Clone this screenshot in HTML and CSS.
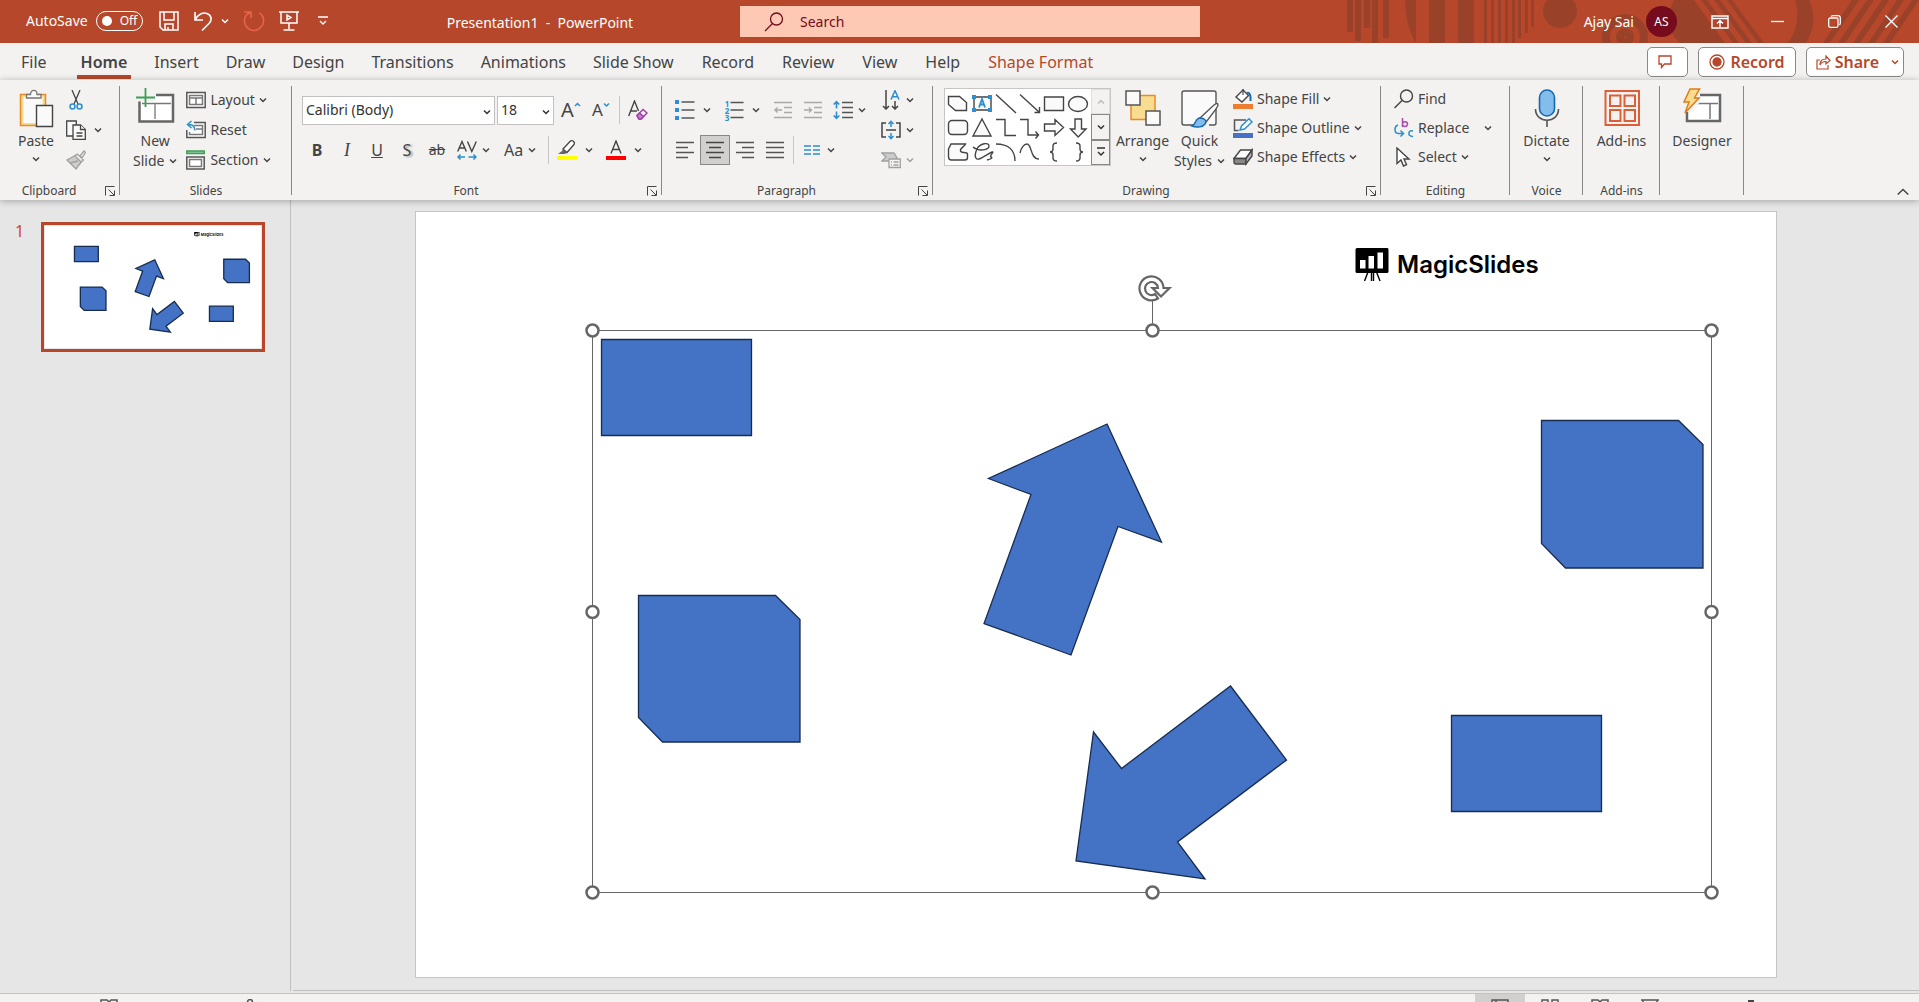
FILE: index.html
```html
<!DOCTYPE html>
<html lang="en">
<head>
<meta charset="utf-8">
<title>Presentation1 - PowerPoint</title>
<link rel="stylesheet" href="styles.css">
</head>
<body>
<svg class="defs" aria-hidden="true">
  <symbol id="chev" viewBox="0 0 8 8"><path d="M1 2.500 4 5.500 7 2.500" fill="none" stroke="currentColor" stroke-width="1.500"/></symbol>
  <symbol id="launch" viewBox="0 0 10 10"><path d="M.5 9.500V.5H9.500M3.500 3.500 9 9M9.500 4.500V9.500H4.500" fill="none" stroke="currentColor"/></symbol>
  <g id="slide-art">
    <g fill="#4472c4" stroke="#172c51" stroke-width="1.300">
      <path vector-effect="non-scaling-stroke" d="M185.500 128.500h150v96h-150z"/>
      <path vector-effect="non-scaling-stroke" d="M1035.500 504.500h150v96h-150z"/>
      <path vector-effect="non-scaling-stroke" d="M1125.500 209.500h137l24.500 24v123.500h-137.500l-24-24.500z"/>
      <path vector-effect="non-scaling-stroke" d="M222.500 384.500h137l24.500 24v122.500h-137.500l-24-24.500z"/>
      <path vector-effect="non-scaling-stroke" d="M691 213 745.500 331 702 315.500 655 444 568 412.500 615 283.500 572.500 267.500z"/>
      <path vector-effect="non-scaling-stroke" d="M814.500 475 870.500 549 761.500 631 789 668 660 650 677.500 521 705.500 557.500z"/>
    </g>
    <path d="M941 37h30a1.500 1.500 0 0 1 1.500 1.500v22a1.500 1.500 0 0 1-1.500 1.500h-30a1.500 1.500 0 0 1-1.500-1.500v-22a1.500 1.500 0 0 1 1.500-1.500z"/>
    <path d="M944 49h5.500v8.500H944zM952.500 45h5.500v12.500h-5.500zM961.500 41.500h5.500v16h-5.500z" fill="#fff"/>
    <path d="M952 61l-3.500 9M955.500 61v9M957.500 61v9M960.500 61l3.500 9" stroke="#000" stroke-width="1.400"/>
  </g>
</svg>

<div class="app">
  <header class="titlebar">
    <svg class="pattern" viewBox="0 0 574 43" aria-hidden="true">
      <g fill="#9a412a">
        <path d="M2 0h6v32H2zM10 0h6v41h-6zM19 0h6v28h-6zM27 0h6v43h-6zM38 0h6v38h-6zM60 0h11v43C64 32 60 15 60 0zM84 0h16v43H84zM113 0h16v43h-16z"/>
        <path d="M139 0h3v43h-3zM146 0h3v43h-3zM153 0h3v43h-3zM160 0h3v43h-3zM167 0h3v43h-3zM173 0h3v38h-3zM180 0h3v33h-3zM186 0h3v27h-3z"/>
        <circle cx="215" cy="11" r="17"/>
        <path d="M335 0h14l31 43h-45c-12-10-14-28-6-43zM356 0h6l32 43h-6zM369 0h6l32 43h-6zM382 0h5l32 43h-6zM450 0h14c7 15 5 30-3 43h-18c9-12 12-29 7-43zM507 0h7l-29 43h-7zM522 0h7l-29 43h-7zM537 0h7l-29 43h-7zM552 0h7l-29 43h-7zM567 0h7l-29 43h-7z"/>
      </g>
      <g fill="none" stroke="#9a412a" stroke-width="8"><circle cx="280" cy="37" r="19"/><circle cx="280" cy="37" r="5"/></g>
    </svg>
    <div class="quick">
      <label class="autosave">AutoSave <input type="checkbox" aria-label="AutoSave"><span class="switch"><i></i>Off</span></label>
      <button class="qbtn" aria-label="Save"><svg width="20" height="20" viewBox="0 0 20 20" fill="none" stroke="#fff" stroke-width="1.500"><path d="M1 1h18v18H4l-3-3zM5 1v8h10V1M6 19v-6h8v6M9 16v3"/></svg></button>
      <button class="qbtn undo" aria-label="Undo"><svg width="20" height="20" viewBox="0 0 20 20" fill="none" stroke="#fff" stroke-width="1.600"><path d="M2 1v8h8M2 9C5 3 10 1 14 2.500c5 2 5 7 2 10L9 19.500"/></svg><svg width="8" height="8"><use href="#chev"/></svg></button>
      <button class="qbtn redo" aria-label="Redo"><svg width="22" height="22" viewBox="0 0 22 22" fill="none" stroke="#e5644a" stroke-width="1.600"><path d="M1 2h7v6M8 2.500C3 4 1 8 1.500 12c.5 5 5 8.500 9.500 8.500s9-4 9.500-8.500c.4-4-1-7-4-9"/></svg></button>
      <button class="qbtn" aria-label="Start from beginning"><svg width="20" height="20" viewBox="0 0 20 20" fill="none" stroke="#fff" stroke-width="1.500"><path d="M0 1h20M2 1v11h16V1M10 12v6M4.500 19h11M8 4v5l4-2.500z"/></svg></button>
      <button class="qbtn" aria-label="Customize toolbar"><svg width="10" height="10" viewBox="0 0 10 10" fill="none" stroke="#fff" stroke-width="1.300"><path d="M0 1h10M2 5l3 3 3-3"/></svg></button>
      <span class="doc-title">Presentation1&nbsp; -&nbsp; PowerPoint</span>
    </div>
    <label class="search">
      <svg width="20" height="20" viewBox="0 0 20 20" fill="none" stroke="#750b1c" stroke-width="1.300"><circle cx="12.500" cy="7" r="6"/><path d="M8.500 11.500 1 19"/></svg>
      <input type="search" placeholder="Search" aria-label="Search">
    </label>
    <div class="window">
      <span class="user">Ajay Sai</span><span class="avatar">AS</span>
      <button class="wbtn" aria-label="Ribbon display options"><svg width="18" height="14" viewBox="0 0 18 14" fill="none" stroke="#fff" stroke-width="1.400"><path d="M1 1h16v12H1zM1 3.500h16M9 12V6M6 8.500 9 5.500l3 3"/></svg></button>
      <button class="wbtn" aria-label="Minimize"><svg width="13" height="13" viewBox="0 0 13 13" stroke="#fff" stroke-width="1.300"><path d="M0 6.500h13"/></svg></button>
      <button class="wbtn" aria-label="Restore"><svg width="13" height="13" viewBox="0 0 13 13" fill="none" stroke="#fff" stroke-width="1.300"><rect x=".7" y="3" width="9.300" height="9.300" rx="1.500"/><path d="M3 1.500Q4 .7 5 .7h5q2.300 0 2.300 2.300v5q0 1-.8 2"/></svg></button>
      <button class="wbtn" aria-label="Close"><svg width="13" height="13" viewBox="0 0 13 13" stroke="#fff" stroke-width="1.300"><path d="M.5.5l12 12M12.500.5l-12 12"/></svg></button>
    </div>
  </header>

  <nav class="tabs">
    <a href="#">File</a><a href="#" class="active">Home</a><a href="#">Insert</a><a href="#">Draw</a><a href="#">Design</a><a href="#">Transitions</a><a href="#">Animations</a><a href="#">Slide Show</a><a href="#">Record</a><a href="#">Review</a><a href="#">View</a><a href="#">Help</a><a href="#" class="context">Shape Format</a>
    <div class="actions">
      <button class="action" aria-label="Comments"><svg width="14" height="14" viewBox="0 0 14 14" fill="none" stroke="#b7472a" stroke-width="1.300"><path d="M1 1h12v8H6.500L3.500 12.500V9H1z"/></svg></button>
      <button class="action"><svg width="16" height="16" viewBox="0 0 16 16" fill="none" stroke="#b7472a" stroke-width="1.300"><circle cx="8" cy="8" r="7"/><circle cx="8" cy="8" r="4" fill="#b7472a"/></svg>Record</button>
      <button class="action share"><svg width="15" height="15" viewBox="0 0 15 15" fill="none" stroke="#b7472a" stroke-width="1.200"><path d="M4 5H1v9h11v-4M4 10c0-4 2-6 6-6V1l4 4.500L10 9V6.500C7 6.500 5 7.500 4 10z"/></svg>Share<svg width="8" height="8"><use href="#chev"/></svg></button>
    </div>
  </nav>

  <div class="ribbon">
    <section class="group clipboard">
      <div class="body">
        <button class="big"><svg width="36" height="40" viewBox="0 0 36 40"><path d="M2.500 6.500h25v31h-25z" fill="#f8dc8f" stroke="#e88a2a" stroke-width="1.500"/><path d="M5.500 9h19v26h-19z" fill="#fafafa"/><path d="M8.500 10V6.500h4C12.500 1 19 1 19 6.500h4V10z" fill="#fafafa" stroke="#777" stroke-width="1.300"/><path d="M18.500 17.500h16v21h-16z" fill="#fafafa" stroke="#444" stroke-width="1.400"/></svg><span>Paste</span><svg width="8" height="8" class="dn"><use href="#chev"/></svg></button>
        <div class="stack">
          <button class="row" aria-label="Cut"><svg width="20" height="20" viewBox="0 0 20 20" fill="none" stroke="#444" stroke-width="1.300"><path d="M6 0l6 14M14 0 8 14"/><g stroke="#2b8fd0" stroke-width="1.500"><circle cx="6.500" cy="16.500" r="2.500"/><circle cx="13.500" cy="16.500" r="2.500"/></g></svg></button>
          <button class="row drop wide" aria-label="Copy"><svg width="20" height="20" viewBox="0 0 20 20" fill="#fafafa" stroke="#444" stroke-width="1.300"><path d="M.7 1h9.600l0 15H.7z"/><path d="M7 5h7.500l4.800 4.500V19.500H7z"/><path d="M14.500 5v4.500h4.800M10.500 13h6M10.500 16h6"/></svg><svg width="8" height="8"><use href="#chev"/></svg></button>
          <button class="row" aria-label="Format Painter"><svg width="20" height="20" viewBox="0 0 20 20" fill="#ccc" stroke="#a0a0a0" stroke-width="1.300"><path d="M1 10l9-5 6 6-6 8z"/><path d="M9 6l2.500-2 6 6-2.500 2zM14 6l4-5 1.500 1.500L16 8z" fill="#eee"/><path d="M4 13l8-2"/></svg></button>
        </div>
      </div>
      <div class="caption">Clipboard<button aria-label="Clipboard options"><svg width="10" height="10"><use href="#launch"/></svg></button></div>
    </section>

    <section class="group slides">
      <div class="body">
        <button class="big"><svg width="40" height="40" viewBox="0 0 40 40"><path d="M4.500 7h33.500v26.500H4.500z" fill="#fff" stroke="#666" stroke-width="2.500"/><path d="M7 15.500h29M20 15.500V31" stroke="#777" stroke-width="1.300" fill="none"/><path d="M0 4h21v9.500H0z" fill="#f3f2f1"/><path d="M10.500 0v19M1 9.500h19" stroke="#3f9e57" stroke-width="1.800"/></svg><span>New</span><span>Slide <svg width="8" height="8"><use href="#chev"/></svg></span></button>
        <div class="stack">
          <button class="row"><svg width="20" height="20" viewBox="0 0 20 20" fill="#fff" stroke="#555" stroke-width="1.500"><path d="M.8 2.500h18.400v15H.8z"/><path d="M3.500 5.500h13v9h-13zM3.500 8h13M10 8v6.500" stroke="#777"/></svg>Layout<svg width="8" height="8"><use href="#chev"/></svg></button>
          <button class="row"><svg width="20" height="20" viewBox="0 0 20 20" fill="#fff" stroke="#555" stroke-width="1.500"><path d="M.8 2.500h18.400v15H.8z"/><path d="M8 5.500h8.500v9h-13V12M10 9h6" stroke="#777"/><path d="M0 1h8v9H0z" fill="#f3f2f1" stroke="none"/><path d="M5.500 1 1.500 4.500l4 3.500M1.500 4.500c4-.5 7 1 7.500 6" fill="none" stroke="#2b8fd0"/></svg>Reset</button>
          <button class="row"><svg width="20" height="20" viewBox="0 0 20 20" fill="#fff" stroke="#555" stroke-width="1.500"><path d="M.8 1h17.400v2.500H.8z" fill="#8fcf9f" stroke="#3f9e57"/><path d="M.8 7h17.400v12H.8z"/><path d="M3.500 9.500h12v7h-12z" stroke="#777"/></svg>Section<svg width="8" height="8"><use href="#chev"/></svg></button>
        </div>
      </div>
      <div class="caption">Slides</div>
    </section>

    <section class="group font">
      <div class="body lines">
        <div class="line">
          <span class="pick name"><select aria-label="Font"><option>Calibri (Body)</option></select><svg width="8" height="8"><use href="#chev"/></svg></span>
          <span class="pick size"><select aria-label="Font size"><option>18</option></select><svg width="8" height="8"><use href="#chev"/></svg></span>
          <button class="tool" aria-label="Increase font size"><span class="glyph g18">A</span><svg width="7" height="20" viewBox="0 0 7 20" fill="none" stroke="#2b8fd0" stroke-width="1.500"><path d="M1 6l2.500-2.500L6 6"/></svg></button>
          <button class="tool" aria-label="Decrease font size"><span class="glyph g16">A</span><svg width="7" height="20" viewBox="0 0 7 20" fill="none" stroke="#2b8fd0" stroke-width="1.500"><path d="M1 3.500 3.500 6 6 3.500"/></svg></button>
          <i class="bar"></i>
          <button class="tool" aria-label="Clear formatting"><svg width="20" height="20" viewBox="0 0 20 20" fill="none" stroke="#444" stroke-width="1.400"><path d="M.7 16 6.500 1l4 10M3 11h6"/><path d="M9 15.500l6-6 4 3.500-6 6h-2z" stroke="#a23ba8" fill="#f3f2f1"/><path d="M9 15.500l2.500-2.500 4 3.500-2.500 2.500h-2z" fill="#c87fcc" stroke="#a23ba8"/></svg></button>
        </div>
        <div class="line">
          <button class="tool glyph"><b>B</b></button>
          <button class="tool glyph"><em>I</em></button>
          <button class="tool glyph"><u>U</u></button>
          <button class="tool glyph shadow">S</button>
          <button class="tool glyph"><s>ab</s></button>
          <button class="tool drop" aria-label="Character spacing"><svg width="20" height="20" viewBox="0 0 20 20" fill="none" stroke="#444" stroke-width="1.400"><path d="M.7 11.500 5 1.500l4.300 10M2.500 8h5M10.500 1.500l4.300 10 4.500-10"/><path d="M8 17H1M3.500 14.500 1 17l2.500 2.500M11.500 17h7.500M16.500 14.500 19 17l-2.500 2.500" stroke="#2b8fd0" stroke-width="1.500"/></svg><svg width="8" height="8"><use href="#chev"/></svg></button>
          <button class="tool drop case"><span class="glyph">Aa</span><svg width="8" height="8"><use href="#chev"/></svg></button>
          <i class="bar"></i>
          <button class="tool drop wide" aria-label="Highlight"><svg width="20" height="20" viewBox="0 0 20 20"><path d="M0 16h20v4H0z" fill="#ff0"/><path d="M6 9l7-7.500c2-2 5.500.5 4 3L10 12.500z" fill="#fff" stroke="#444" stroke-width="1.300"/><path d="M6 9l4 3.500-2 1.500H1l4-3z" fill="#666"/></svg><svg width="8" height="8"><use href="#chev"/></svg></button>
          <button class="tool drop wide" aria-label="Font colour"><svg width="20" height="20" viewBox="0 0 20 20"><path d="M0 16h20v4H0z" fill="red"/><path d="M5 13.500 10 1l5 12.500M6.500 9.500h7" fill="none" stroke="#444" stroke-width="1.400"/></svg><svg width="8" height="8"><use href="#chev"/></svg></button>
        </div>
      </div>
      <div class="caption">Font<button aria-label="Font options"><svg width="10" height="10"><use href="#launch"/></svg></button></div>
    </section>

    <section class="group para">
      <div class="body">
        <div class="lines">
          <div class="line">
            <button class="tool drop wide" aria-label="Bullets"><svg width="20" height="20" viewBox="0 0 20 20"><path d="M0 0h4v4H0zM0 8h4v4H0zM0 16h4v4H0z" fill="#2b8fd0"/><path d="M6.500 2H19.500M6.500 10H19.500M6.500 18H19.500" stroke="#555" stroke-width="1.400"/></svg><svg width="8" height="8"><use href="#chev"/></svg></button>
            <button class="tool drop wide" aria-label="Numbering"><span class="numbering"><span class="nums"><i>1</i><i>2</i><i>3</i></span><svg width="14" height="20" viewBox="0 0 14 20"><path d="M.5 2.500H13.500M.5 10H13.500M.5 17.500H13.500" stroke="#555" stroke-width="1.400"/></svg></span><svg width="8" height="8"><use href="#chev"/></svg></button>
            <button class="tool" aria-label="Decrease indent"><svg width="20" height="20" viewBox="0 0 20 20" fill="none" stroke="#a9a9a9" stroke-width="1.400"><path d="M1 2.500h18M11 7.500h8M11 12.500h8M1 17.500h18M9 10H2M4.500 7.500 2 10l2.500 2.500"/></svg></button>
            <button class="tool" aria-label="Increase indent"><svg width="20" height="20" viewBox="0 0 20 20" fill="none" stroke="#a9a9a9" stroke-width="1.400"><path d="M1 2.500h18M11 7.500h8M11 12.500h8M1 17.500h18M1 10h7.500M6 7.500 8.500 10 6 12.500"/></svg></button>
            <button class="tool drop" aria-label="Line spacing"><svg width="20" height="20" viewBox="0 0 20 20" fill="none"><path d="M9 2.500h11M9 7.500h11M9 12.500h11M9 17.500h11" stroke="#555" stroke-width="1.400"/><path d="M3.500 2v6.500M3.500 11.500V18M.7 4.500 3.500 1.700l2.800 2.800M.7 15.500l2.800 2.800 2.800-2.800" stroke="#2b8fd0" stroke-width="1.600"/></svg><svg width="8" height="8"><use href="#chev"/></svg></button>
          </div>
          <div class="line">
            <button class="tool" aria-label="Align left"><svg width="20" height="20" viewBox="0 0 20 20" stroke="#555" stroke-width="1.400"><path d="M1 2.500h18M1 7.500h12M1 12.500h18M1 17.500h12"/></svg></button>
            <button class="tool on" aria-label="Centre"><svg width="20" height="20" viewBox="0 0 20 20" stroke="#444" stroke-width="1.400"><path d="M1 2.500h18M4 7.500h12M1 12.500h18M4 17.500h12"/></svg></button>
            <button class="tool" aria-label="Align right"><svg width="20" height="20" viewBox="0 0 20 20" stroke="#555" stroke-width="1.400"><path d="M1 2.500h18M7 7.500h12M1 12.500h18M7 17.500h12"/></svg></button>
            <button class="tool" aria-label="Justify"><svg width="20" height="20" viewBox="0 0 20 20" stroke="#555" stroke-width="1.400"><path d="M1 2.500h18M1 7.500h18M1 12.500h18M1 17.500h18"/></svg></button>
            <i class="bar"></i>
            <button class="tool drop" aria-label="Columns"><svg width="20" height="20" viewBox="0 0 20 20" stroke="#2b8fd0" stroke-width="1.500"><path d="M2 6h7M2 10h7M2 14h7M11 6h7M11 10h7M11 14h7"/></svg><svg width="8" height="8"><use href="#chev"/></svg></button>
          </div>
        </div>
        <div class="stack">
          <button class="row drop" aria-label="Text direction"><svg width="20" height="20" viewBox="0 0 20 20" fill="none" stroke="#444" stroke-width="1.500"><path d="M5 0v18.500M2 16l3 3 3-3M14 11v7.500M11 16l3 3 3-3"/><path d="M10 9.500 14 .7l4 8.800M11.500 6.700h5" stroke="#2b8fd0"/></svg><svg width="8" height="8"><use href="#chev"/></svg></button>
          <button class="row drop" aria-label="Align text"><svg width="20" height="20" viewBox="0 0 20 20" fill="none" stroke="#444" stroke-width="1.500"><path d="M5 3H1v14h4M15 3h4v14h-4M5 10h10"/><path d="M10 2v5M10 13v5M7.500 4 10 1.300 12.500 4M7.500 16l2.500 2.700 2.500-2.700" stroke="#2b8fd0"/></svg><svg width="8" height="8"><use href="#chev"/></svg></button>
          <button class="row drop dim" aria-label="SmartArt"><svg width="20" height="20" viewBox="0 0 20 20" fill="#ccc" stroke="#a0a0a0" stroke-width="1.300"><path d="M1 3h12l3 5-3 3H1l4-4z"/><path d="M8 9h11.300v8.500H8z" fill="#f5f5f5"/><path d="M10 12h1M12.500 12h5M10 15h1M12.500 15h5"/></svg><svg width="8" height="8"><use href="#chev"/></svg></button>
        </div>
      </div>
      <div class="caption">Paragraph<button aria-label="Paragraph options"><svg width="10" height="10"><use href="#launch"/></svg></button></div>
    </section>

    <section class="group drawing">
      <div class="body">
        <div class="gallery">
          <svg width="146" height="76" viewBox="0 0 146 76" fill="#fafafa" stroke="#444" stroke-width="1.400" role="img" aria-label="Shapes">
            <path d="M3.500 7.500h11l7 6v8h-11l-7-6z"/>
            <path d="M29 8h17v13H29z"/><g fill="#2b8fd0" stroke="none"><path d="M27 6h4v4h-4zM43 6h4v4h-4zM27 19h4v4h-4zM43 19h4v4h-4z"/></g><path d="M34 18.500 37 10l3 8.500M35 15.500h4" stroke="#2b8fd0" stroke-width="1.800"/>
            <path d="M51 5.500 71 24M75 5.500 94 23M94.500 18v5.500h-5" fill="none"/>
            <path d="M99.500 8h19v13.500h-19z"/><ellipse cx="133" cy="15" rx="9.500" ry="7.500"/>
            <rect x="3.500" y="31.500" width="19" height="14" rx="3.500"/><path d="M37 30l9 17H28z"/>
            <path d="M51 30.500h9v16h11M75 30.500h8v15.500h10M90.500 42.500l3 3.500-3 3.500" fill="none"/>
            <path d="M99.500 35h10.500v-4.500l8.500 8-8.500 8V42H99.500zM130 30h6.500v10h4.500l-7.800 8-7.700-8h4.500z"/>
            <path d="M6 55h14.500c-1 3-6 4-5 7s6 0 7 3v3.500q0 2.500-2.500 2.500H6.500q-3 0-3-3V60z"/>
            <path d="M28 58c6 5 16 3 16-1s-9-3-12 3-2 11 2 10 10-6 13-7-3 4-1 5 0 2-4 3M51 55c12 0 19 6 19 17M75 64c1-5 4-9 7-9 5 0 3 15 12 15M112 54q-4 0-4 3v3q0 3-3 3 3 0 3 3v3q0 3 4 3M131 54q4 0 4 3v3q0 3 3 3-3 0-3 3v3q0 3-4 3" fill="none"/>
          </svg>
          <div class="scroll"><button disabled aria-label="Previous shapes"><svg width="8" height="8" viewBox="0 0 8 8"><path d="M1 5.500 4 2.500 7 5.500" fill="none" stroke="#bbb" stroke-width="1.500"/></svg></button><button aria-label="Next shapes"><svg width="8" height="8"><use href="#chev"/></svg></button><button aria-label="More shapes"><svg width="8" height="10" viewBox="0 0 8 10" fill="none" stroke="#333" stroke-width="1.500"><path d="M0 1h8M1 5l3 3 3-3"/></svg></button></div>
        </div>
        <button class="big"><svg width="36" height="40" viewBox="0 0 36 40" stroke-width="1.500"><path d="M6 7.500h24v24H6z" fill="#f8dc8f" stroke="#e88a2a"/><g fill="#fafafa" stroke="#555"><path d="M1 3h14v14H1zM21 23h14v14H21z"/></g></svg><span>Arrange</span><svg width="8" height="8" class="dn"><use href="#chev"/></svg></button>
        <button class="big"><svg width="40" height="40" viewBox="0 0 40 40" stroke-width="1.400"><rect x="2" y="3" width="34" height="34" rx="2" fill="#fafafa" stroke="#555"/><path d="M14 39q6-12 15-12v11z" fill="#f3f2f1"/><path d="M20 30 34 17q4-3 4 0 0 2-12 17z" fill="#fff" stroke="#555"/><path d="M12 38c4-1 3-8 8-8s7 3 5 6-8 4-13 2z" fill="#84bceb" stroke="#1569b4"/></svg><span>Quick</span><span>Styles <svg width="8" height="8"><use href="#chev"/></svg></span></button>
        <div class="stack tight">
          <button class="row"><svg width="20" height="20" viewBox="0 0 20 20"><path d="M0 15h20v5H0z" fill="#ed7d31"/><path d="M3 8l7-7 5.500 5.500L9 13z" fill="#fff" stroke="#444" stroke-width="1.400"/><path d="M10 6V0" stroke="#444" stroke-width="1.200"/><path d="M14 4c3-1 4 3 3.500 8" fill="none" stroke="#1569b4" stroke-width="2"/></svg>Shape Fill<svg width="8" height="8"><use href="#chev"/></svg></button>
          <button class="row"><svg width="20" height="20" viewBox="0 0 20 20"><path d="M0 15h20v5H0z" fill="#4472c4"/><path d="M13 2H1.500v10.500h4" fill="none" stroke="#555" stroke-width="1.500"/><path d="M7 12l1.500-4L16 .8 19 4l-7.500 7z" fill="#fff" stroke="#2b8fd0" stroke-width="1.500"/></svg>Shape Outline<svg width="8" height="8"><use href="#chev"/></svg></button>
          <button class="row"><svg width="20" height="20" viewBox="0 0 20 20" stroke="#444" stroke-width="1.400"><path d="M1 11.500 7.500 3H19l-6 8.500z" fill="#fff"/><path d="M1 11.500h12V17H3q-2 0-2-2z" fill="#888"/><path d="M13 11.500 19 3v6l-6 8z" fill="#bbb"/></svg>Shape Effects<svg width="8" height="8"><use href="#chev"/></svg></button>
        </div>
      </div>
      <div class="caption">Drawing<button aria-label="Drawing options"><svg width="10" height="10"><use href="#launch"/></svg></button></div>
    </section>

    <section class="group editing">
      <div class="body">
        <div class="stack tight">
          <button class="row"><svg width="20" height="20" viewBox="0 0 20 20" fill="none" stroke="#444" stroke-width="1.400"><circle cx="12.500" cy="7" r="6"/><path d="M8 11.500.5 19"/></svg>Find</button>
          <button class="row replace"><svg width="20" height="20" viewBox="0 0 20 20" fill="none" stroke-width="1.500"><path d="M8.500 0v9M8.500 6c0-3 5-3 5 0s-5 3.500-5 0" stroke="#a94bb3"/><path d="M4 7c-4 1-4 8 0 8.500h5M6.500 12.500 9.500 15.500l-3 3M19 13c-5-2-6 6 0 5.500" stroke="#2b8fd0"/></svg>Replace<svg width="8" height="8"><use href="#chev"/></svg></button>
          <button class="row"><svg width="20" height="20" viewBox="0 0 20 20" fill="#fff" stroke="#444" stroke-width="1.400"><path d="M3 1v15.500l4-3.500 2.500 6 3-1.300-2.500-5.700h5z"/></svg>Select<svg width="8" height="8"><use href="#chev"/></svg></button>
        </div>
      </div>
      <div class="caption">Editing</div>
    </section>

    <section class="group voice">
      <div class="body"><button class="big"><svg width="26" height="40" viewBox="0 0 26 40" fill="none" stroke="#555" stroke-width="1.600"><rect x="5.500" y="2" width="15" height="26" rx="7.500" fill="#84bceb" stroke="#1569b4"/><path d="M1.500 21c0 15 23 15 23 0M13 32v7"/></svg><span>Dictate</span><svg width="8" height="8" class="dn"><use href="#chev"/></svg></button></div>
      <div class="caption">Voice</div>
    </section>
    <section class="group addins">
      <div class="body"><button class="big"><svg width="36" height="40" viewBox="0 0 36 40" fill="none" stroke="#dd5f35" stroke-width="2"><path d="M1.500 3h33.500v34H1.500zM6 7.500h10.500V18H6zM20.500 7.500H31V18H20.500zM6 22h10.500v11H6zM20.500 22H31v11H20.500z"/></svg><span>Add-ins</span></button></div>
      <div class="caption">Add-ins</div>
    </section>
    <section class="group designer">
      <div class="body"><button class="big"><svg width="40" height="40" viewBox="0 0 40 40"><path d="M5 7h33v26H5z" fill="#fff" stroke="#666" stroke-width="2.500"/><path d="M9 15.500h27M28 15.500V31" stroke="#777" stroke-width="1.500"/><path d="M0 0h18v14l-8 10H0z" fill="#f3f2f1"/><path d="M8 1h9.500l-5 9H17L3 25l4-11H2z" fill="#f8dc8f" stroke="#e07b1a" stroke-width="1.500"/></svg><span>Designer</span></button></div>
    </section>
    <button class="collapse" aria-label="Collapse ribbon"><svg width="12" height="8" viewBox="0 0 12 8" fill="none" stroke="#444" stroke-width="1.500"><path d="M.7 6.500 6 1.500l5.300 5"/></svg></button>
  </div>

  <main class="work">
    <aside class="thumbs">
      <span class="num">1</span>
      <button class="thumb" aria-label="Slide 1"><svg viewBox="0 0 1360 765"><use href="#slide-art"/><text x="981" y="62" class="logo-text">MagicSlides</text></svg></button>
    </aside>
    <div class="canvas">
      <svg class="slide" viewBox="0 1 1360 765">
        <use href="#slide-art"/>
        <text x="981" y="62" class="logo-text">MagicSlides</text>
        <g fill="none" stroke="#666">
          <path d="M176.500 119.500h1119v562h-1119zM736.500 90v24"/>
        </g>
        <g fill="#fff" stroke="#666" stroke-width="2.500">
          <circle cx="176.500" cy="119.500" r="6"/><circle cx="736.500" cy="119.500" r="6"/><circle cx="1295.500" cy="119.500" r="6"/>
          <circle cx="176.500" cy="401" r="6"/><circle cx="1295.500" cy="401" r="6"/>
          <circle cx="176.500" cy="681.500" r="6"/><circle cx="736.500" cy="681.500" r="6"/><circle cx="1295.500" cy="681.500" r="6"/>
        </g>
        <path d="M742 87.500A12 12 0 1 1 747.500 77H753.500L745 85.500 736.500 77H742A6.500 6.500 0 1 0 739 83z" fill="#fff" stroke="#666" stroke-width="2.200"/>
      </svg>
    </div>
  </main>

  <footer class="status">
    <button aria-label="Spelling"><svg width="18" height="16" viewBox="0 0 18 16" fill="none" stroke="#555" stroke-width="1.500"><path d="M9 3 7 1H1v12h6l2 2 2-2h6V1h-6zv12"/></svg></button>
    <button class="access" aria-label="Accessibility"><svg width="18" height="18" viewBox="0 0 18 18" fill="none" stroke="#555" stroke-width="1.500"><circle cx="9" cy="3" r="2.500"/><path d="M1 3.500q8 5 16 0M6 7v5l-2 5M12 7v5l2 5"/></svg></button>
    <div class="views">
      <button class="notes" aria-label="Notes"><svg width="10" height="16" viewBox="0 0 10 16" fill="none" stroke="#555" stroke-width="1.500"><path d="M1 5l4-4 4 4"/></svg></button>
      <button class="view on" aria-label="Normal"><svg width="18" height="14" viewBox="0 0 18 14" fill="none" stroke="#555" stroke-width="1.500"><path d="M1 1h16v12H1zM5 1v12M5 4h12"/></svg></button>
      <button class="view" aria-label="Slide sorter"><svg width="18" height="14" viewBox="0 0 18 14" fill="none" stroke="#555" stroke-width="1.500"><path d="M1 1h6v5H1zM11 1h6v5h-6zM1 9h6v4H1zM11 9h6v4h-6z"/></svg></button>
      <button class="view" aria-label="Reading view"><svg width="18" height="16" viewBox="0 0 18 16" fill="none" stroke="#555" stroke-width="1.500"><path d="M9 3 7 1H1v12h6l2 2 2-2h6V1h-6zv12"/></svg></button>
      <button class="view" aria-label="Slide show"><svg width="18" height="14" viewBox="0 0 18 14" fill="none" stroke="#555" stroke-width="1.500"><path d="M0 1h18M2 1v8h14V1M9 9v4"/></svg></button>
      <i class="knob"></i>
      <button class="fit" aria-label="Fit to window"><svg width="10" height="16" viewBox="0 0 10 16" fill="none" stroke="#555" stroke-width="1.500"><path d="M2 4l3-3 3 3M5 1v12"/></svg></button>
    </div>
  </footer>
</div>
</body>
</html>
```

FILE: styles.css
```css
* { box-sizing: border-box; }
html, body { margin: 0; height: 100%; overflow: hidden; }
body { font: 14px/20px "Noto Sans", "Open Sans", sans-serif; color: #444; }
button { border: 0; padding: 0; margin: 0; background: none; font: inherit; color: inherit; }
svg { display: block; flex: none; }
a { color: inherit; text-decoration: none; }
.defs { position: absolute; width: 0; height: 0; }

/* the status bar runs past the lower edge of the window */
.app { height: calc(100vh + 20px); display: flex; flex-direction: column; }

/* title bar */
.titlebar { position: relative; flex: none; height: 43px; display: grid; grid-template-columns: minmax(0, 740fr) minmax(0, 460fr) minmax(0, 719fr); align-items: center; background: #b7472a; color: #fff; }
.pattern { position: absolute; right: 0; top: 0; width: 574px; height: 43px; }
.quick { display: flex; align-items: center; padding-left: 26px; padding-bottom: 2px; }
.autosave { display: flex; align-items: center; gap: 8px; margin-right: 16px; }
.autosave input { position: absolute; opacity: 0; width: 1px; height: 1px; }
.switch { display: flex; align-items: center; gap: 8px; width: 47px; height: 20px; padding-left: 5px; border: 1px solid #fff; border-radius: 10px; font-size: 12px; line-height: 18px; }
.switch i { width: 10px; height: 10px; border-radius: 50%; background: #fff; }
.qbtn { display: flex; align-items: center; gap: 8px; margin-right: 14px; }
.qbtn:nth-of-type(4) { margin-right: 19px; }
.doc-title { margin-left: 105px; white-space: nowrap; padding-top: 4px; }
.search { height: 31px; display: flex; align-items: center; gap: 16px; padding-left: 24px; background: #fdc9b5; }
.search input { flex: 1; min-width: 0; border: 0; outline: 0; padding: 0; background: none; font: inherit; color: #750b1c; }
.search input::placeholder { color: #750b1c; opacity: 1; }
.window { position: relative; display: flex; align-items: center; justify-content: flex-end; padding-right: 11px; }
.user { margin-right: 12px; }
.avatar { width: 31px; height: 31px; margin-right: 26px; border-radius: 50%; background: #750b1c; font-size: 12px; line-height: 31px; text-align: center; }
.wbtn { width: 34px; height: 30px; display: grid; place-items: center; margin-left: 23px; }
.avatar + .wbtn { margin-left: 0; }

/* tabs */
.tabs { flex: none; height: 37px; display: flex; align-items: stretch; gap: 20px; padding: 0 15px 0 17px; background: #f3f2f1; font-size: 16px; }
.tabs > a { height: 36px; padding: 0 4px; line-height: 38px; white-space: nowrap; }
.tabs > a:first-child { margin-right: 6px; }
.tabs > .active { border-bottom: 4px solid #b7472a; font-weight: 600; }
.tabs > .context { color: #b7472a; }
.tabs > a:nth-child(n+3):nth-child(-n+8) { margin-left: -1px; }
.actions { margin-left: auto; display: flex; gap: 10px; padding-top: 4px; }
.action { display: flex; align-items: center; gap: 5px; height: 30px; padding: 0 10px; border: 1px solid #8a8886; border-radius: 5px; background: #fff; color: #b7472a; font-size: 16px; font-weight: 600; }
.action:first-child { padding: 0 15px 0 10px; }
.action.share { padding: 0 4px 0 9px; gap: 4px; }
.share svg:last-child { margin-left: 8px; }

/* ribbon */
.ribbon { position: relative; z-index: 1; flex: none; height: 120px; display: flex; background: #f3f2f1; box-shadow: 0 1px 7px rgba(0, 0, 0, .3); }
.group { position: relative; flex: none; display: flex; flex-direction: column; }
.group::after { content: ""; position: absolute; right: 0; top: 6px; bottom: 5px; width: 1px; background: #8a8886; }
.body { flex: 1; display: flex; align-items: flex-start; }
.caption { position: relative; height: 20px; font-size: 12px; line-height: 22px; text-align: center; }
.caption button { position: absolute; right: 5px; top: 6px; }
.clipboard { width: 120px; }
.clipboard .caption { padding-right: 22px; }
.slides { width: 172px; }
.font { width: 370px; }
.font .caption, .para .caption, .drawing .caption { padding-right: 22px; }
.para { width: 271px; }
.drawing { width: 448px; }
.editing { width: 129px; }
.voice { width: 73px; }
.addins { width: 77px; }
.designer { width: 84px; }

.big { display: flex; flex-direction: column; align-items: center; padding-top: 8px; white-space: nowrap; }
.big > svg:first-child { margin-bottom: 3px; }
.big span { display: flex; align-items: center; gap: 5px; }
.dn { margin-top: 4px; }
.clipboard .big { margin-left: 18px; }
.clipboard .stack { margin-left: 7px; }
.slides .big { margin-left: 13px; }
.slides .stack { margin-left: 4px; }
.slides .row { gap: 4px; }
.drawing .big { width: 57px; }
.drawing .gallery + .big { margin-left: 3px; }
.voice .big, .addins .big, .designer .big { width: 100%; }

.stack { display: flex; flex-direction: column; align-items: flex-start; padding-top: 5px; }
.stack.tight { padding-top: 4px; }
.row { display: flex; align-items: center; gap: 5px; height: 30px; padding: 0 5px; white-space: nowrap; }
.tight .row { height: 29px; gap: 4px; }
.editing .replace svg:last-child { margin-left: 11px; }
.dim { color: #a0a0a0; }

.lines { display: flex; flex-direction: column; align-items: flex-start; padding-top: 10px; }
.font .lines { padding-left: 10px; }
.line { display: flex; align-items: center; height: 40px; }
.tool { width: 30px; height: 30px; display: flex; align-items: center; justify-content: center; }
.drop { width: auto; padding: 0 5px; gap: 5px; }
.drop.wide { gap: 8px; padding-right: 8px; }
.drop.case { margin-left: 4px; padding-right: 9px; }
.tool.on { background: #d2d0ce; box-shadow: inset 0 0 0 1px #8a8886; }
.glyph { font-size: 16px; }
.g18 { font-size: 20px; }
.g16 { font-size: 17px; }
.glyph em { font-family: "Liberation Serif", serif; font-size: 18px; }
.glyph s { font-size: 14px; }
.shadow { text-shadow: 2px 1px 2px #999; }
.bar { width: 1px; height: 28px; margin: 0 3px; background: #c8c6c4; }
.pick { position: relative; height: 29px; margin-right: 2px; border: 1px solid #c3c1bf; background: #fff; }
.pick select { appearance: none; width: 100%; height: 100%; padding: 0 20px 0 3px; border: 0; background: none; font: inherit; color: #333; }
.pick svg { position: absolute; right: 3px; top: 11px; pointer-events: none; color: #333; }
.name { width: 193px; }
.size { width: 57px; }
.numbering { display: flex; width: 20px; }
.nums { width: 6px; font-size: 8px; font-weight: 700; line-height: 7px; color: #2b8fd0; }
.nums i { display: block; font-style: normal; }
.body > .lines { width: 214px; padding-left: 8px; }

.gallery { display: flex; height: 78px; margin: 8px 0 0 11px; border: 1px solid #c8c6c4; background: #fff; }
.scroll { display: flex; flex-direction: column; width: 19px; }
.scroll button { flex: 1; display: grid; place-items: center; border: 1px solid #8a8886; background: #f3f2f1; color: #333; }
.scroll button:disabled { border-color: #e1dfdd; }
.editing .stack { margin-left: 8px; }
.collapse { margin: auto 10px 4px auto; }

/* workspace */
.work { flex: 1; min-height: 0; display: flex; background: #e6e6e6; border-bottom: 1px solid #c3c3c3; }
.thumbs { flex: none; width: 291px; display: flex; align-items: flex-start; gap: 18px; padding: 22px 0 0 15px; margin: 0 0 2px; border-right: 1px solid #c0c0c0; }
.num { color: #d24726; font-size: 16px; line-height: 18px; width: 8px; }
.thumb { width: 224px; border: 3px solid #b7472a; padding: 1px; background: #e6e6e6; }
.thumb svg { width: 100%; background: #fff; }
.canvas { flex: 1; min-width: 0; display: flex; justify-content: center; padding: 11px 20px 12px 0; margin: 0 0 2px 2px; border-bottom: 1px solid #c0c0c0; }
.slide { height: 100%; max-width: 100%; aspect-ratio: 1362 / 767; background: #fff; border: 1px solid #c6c6c6; }
.logo-text { font: 600 24px Inter, "Noto Sans", sans-serif; fill: #000; }

/* status bar */
.status { flex: none; height: 28px; display: flex; align-items: flex-start; padding: 0 10px 0 100px; background: #f3f2f1; }
.status button { padding-top: 5px; }
.access { margin-left: 123px; }
.views { margin-left: auto; display: flex; }
.notes { margin-right: 66px; }
.view { width: 50px; height: 28px; display: flex; justify-content: center; }
.view.on { background: #d2d0ce; }
.knob { width: 6px; height: 14px; margin: 6px 145px 0 73px; background: #444; }
```
